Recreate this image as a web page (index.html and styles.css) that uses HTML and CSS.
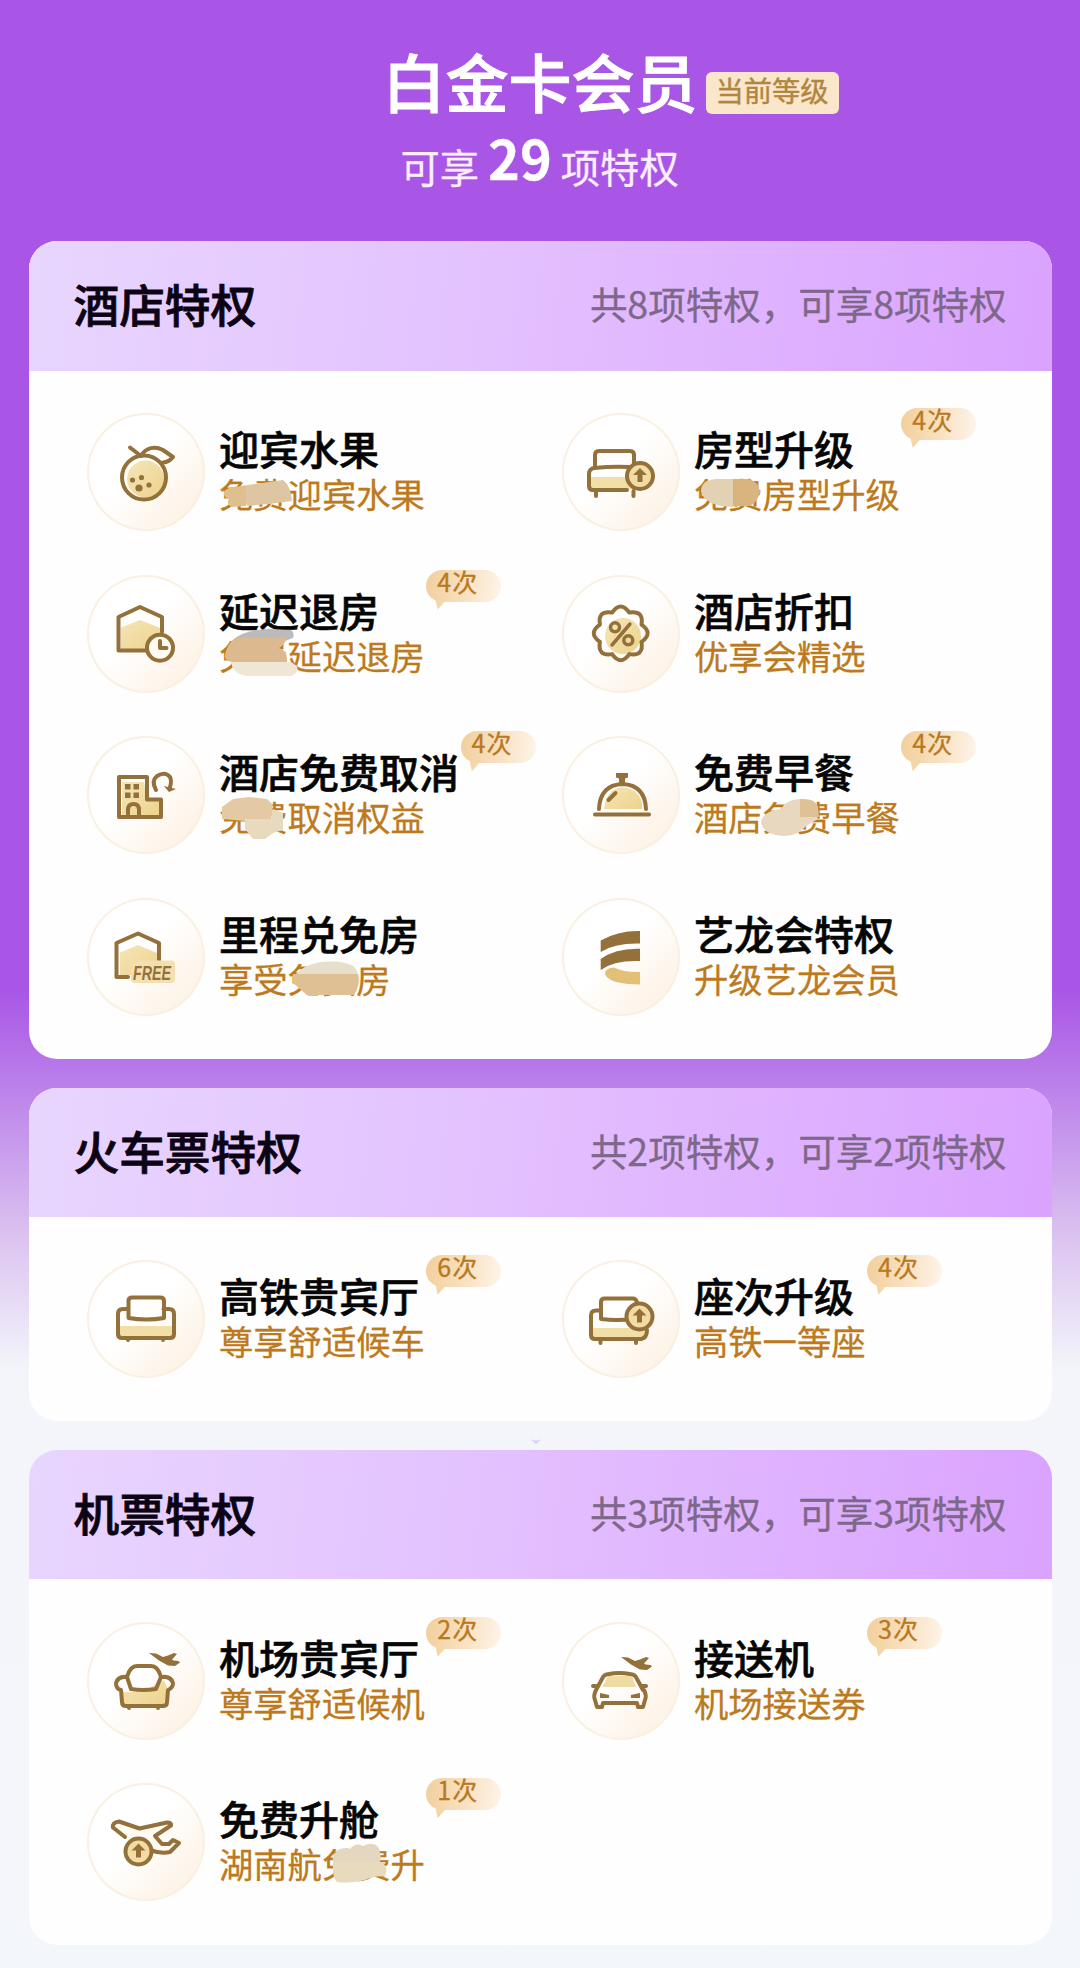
FILE: index.html
```html
<!DOCTYPE html>
<html lang="zh-CN">
<head>
<meta charset="utf-8">
<title>白金卡会员</title>
<link rel="stylesheet" href="styles.css">
</head>
<body>
<svg class="defs" width="0" height="0" aria-hidden="true">
  <defs>
    <linearGradient id="gold" x1="0" y1="0" x2="1" y2="1"><stop offset="0" stop-color="#f5e6b8"/><stop offset="1" stop-color="#edd28c"/></linearGradient>
    <g id="up">
      <circle r="13" fill="#f3dca4" stroke="#94703a" stroke-width="4"/>
      <path d="M0-8l7 7h-4.500v7h-5v-7H-7z" fill="#94703a"/>
    </g>
    <path id="jet" d="M0 0l7 .5 7 3.500 5-1.500 6-2.500 3 1-5 5.500 1.500 1 5 .5 1.500 1.500-5 3.500-7-.500-9-5z" fill="#94703a"/>
  </defs>
</svg>
<main class="page">
  <header class="hero">
    <h1 class="level">白金卡会员<span class="tag">当前等级</span></h1>
    <p class="total"><span>可享</span><b>29</b><span>项特权</span></p>
  </header>

  <section class="card">
    <div class="head"><h2>酒店特权</h2><span>共8项特权，可享8项特权</span></div>
    <div class="grid">
      <article class="item">
        <svg class="icon" viewBox="0 0 118 118"><circle cx="58.500" cy="66" r="18.500" fill="url(#gold)" stroke="none"/><circle cx="57" cy="64.500" r="22"/><path d="M43 34.500l11 8.500C59 34 68 33 76 37l10 7q-4 5-10 5.500"/><g class="solid"><circle cx="45.500" cy="67" r="2.600"/><circle cx="54.500" cy="64.500" r="2.600"/><circle cx="62" cy="72" r="2.600"/><circle cx="52" cy="75" r="3.600"/></g></svg>
        <div class="text"><h3>迎宾水果</h3><p>免费迎宾水果</p>
          <svg class="smear" viewBox="0 0 210 50"><path fill="#dfc6a2" d="M22 14L64 8q8 6 9 21L50 32 28 34z"/><path fill="#dfbf8d" d="M5 20q3-6 22-6v20l-15 1q-5-4-2-8-6-2-5-7z"/></svg></div>
      </article>
      <article class="item">
        <svg class="icon" viewBox="0 0 118 118"><path d="M28 64h46v12H28z" fill="#f2dfa8" stroke="none"/><path d="M33 54V42q0-4 4-4h31q4 0 4 4v8M65 77H31q-4 0-4-4V61q0-5 5-6 20-2 35-1M34 78v5M71.500 78v5"/><use href="#up" x="78" y="63"/></svg>
        <div class="text"><h3>房型升级</h3><p>免费房型升级</p><span class="badge">4次</span>
          <svg class="smear" viewBox="0 0 210 50"><path fill="#e3d1b3" d="M39 7H22Q7 8 7 19q3 15 32 16z"/><path fill="#d8b47f" d="M39 7h16q10 3 11 13-3 12-11 14H39z"/></svg></div>
      </article>
      <article class="item">
        <svg class="icon" viewBox="0 0 118 118"><path d="M34 52.500L53 45l20 8v21H34z" fill="url(#gold)" stroke="none"/><path d="M75 57V42L53 32 31.500 42v33.500H60"/><circle cx="73" cy="72.700" r="13" fill="#fffaf2"/><path d="M73 66v7h6.500"/></svg>
        <div class="text"><h3>延迟退房</h3><p>免费延迟退房</p><span class="badge">4次</span>
          <svg class="smear" viewBox="0 0 210 50"><path fill="#bdbabd" d="M16 4Q28-4 50-5l22 1q4 3 2 8l-8 3z"/><path fill="#dcb98f" d="M16 4l52-1q-2 8-8 11 9 2 8 14H14q-9-1-8-7 2-11 10-17z"/><path fill="#f0e6d5" d="M12 28h60l6 4q2 6-5 10H28q-14-2-16-14z"/></svg></div>
      </article>
      <article class="item">
        <svg class="icon" viewBox="0 0 118 118"><circle cx="61" cy="61" r="18" fill="url(#gold)" stroke="none"/><path transform="translate(58.700 58.300)" d="M-8.600-20.800Q0-33 8.600-20.800 23.300-23.300 20.800-8.600 33 0 20.800 8.600 23.300 23.300 8.600 20.800 0 33-8.600 20.800-23.300 23.300-20.800 8.600-33 0-20.800-8.600-23.300-23.300-8.600-20.800z"/><circle cx="53" cy="52.300" r="4.500" stroke-width="3.500"/><circle cx="66.300" cy="65.300" r="4.500" stroke-width="3.500"/><path d="M68 49L50 70" stroke-width="3.500"/></svg>
        <div class="text"><h3>酒店折扣</h3><p>优享会精选</p></div>
      </article>
      <article class="item">
        <svg class="icon" viewBox="0 0 118 118"><path d="M35 46h22l3 18h13v16H35z" fill="url(#gold)" stroke="none"/><path d="M32 41h28v22.500h14V81H32zM41 80v-6q0-6 5.500-6t5.500 6v6M69 54q-5-9 1-14 8-5 13 1 2 4 0 10"/><g class="solid"><rect x="38" y="48" width="5.500" height="5.500"/><rect x="46.500" y="48" width="5.500" height="5.500"/><rect x="38" y="56.500" width="5.500" height="5.500"/><rect x="46.500" y="56.500" width="5.500" height="5.500"/><path d="M77 50l12 3-7 3z"/></g></svg>
        <div class="text"><h3>酒店免费取消</h3><p>免费取消权益</p><span class="badge">4次</span>
          <svg class="smear" viewBox="0 0 210 50"><path fill="#e3caa5" d="M3 24V12L14 4 30 2l18 2 6 6-2 16H26z"/><path fill="#e8dabf" d="M26 24h26l2-10 10 4v17l-10 3-8 6H34l-8-10z"/></svg></div>
      </article>
      <article class="item">
        <svg class="icon" viewBox="0 0 118 118"><path d="M42 73q2-20 18-22 16 1 20 16v6z" fill="url(#gold)" stroke="none"/><path d="M37 73q1-24 23.500-25Q83 49 84 73M33 78.500H87M46.500 64l7-7"/><path class="solid" d="M54 37h12v4.500l-3 1V48h-6v-5.500l-3-1z"/></svg>
        <div class="text"><h3>免费早餐</h3><p>酒店免费早餐</p><span class="badge">4次</span>
          <svg class="smear" viewBox="0 0 210 50"><path fill="#e7d8bf" d="M106 4Q93 4 87 14q-19 2-20 14 3 12 22 13 15 0 23-10l12-7-4-8z"/><path fill="#dfc195" d="M106 4q16-1 18 8l1 10h-19z"/></svg></div>
      </article>
      <article class="item">
        <svg class="icon" viewBox="0 0 118 118"><path d="M33 54.500L51 47l19 8v15l-24 7H33z" fill="url(#gold)" stroke="none"/><path d="M41 79H29.500V45L51 35.500 72 45v17"/><rect x="44" y="62.500" width="44" height="22.500" rx="4" fill="#f4dfb0" stroke="none"/><text class="free" x="46" y="81.500" textLength="38" lengthAdjust="spacingAndGlyphs">FREE</text></svg>
        <div class="text"><h3>里程兑免房</h3><p>享受免费房</p>
          <svg class="smear" viewBox="0 0 210 50"><path fill="#e7decb" d="M76 18q8-10 26-13 22-2 32 4 5 4 5 9z"/><path fill="#dfbf94" d="M74 17h65q3 10-4 21H88L74 26z"/></svg></div>
      </article>
      <article class="item">
        <svg class="icon" viewBox="0 0 118 118"><g class="solid"><path d="M38.700 42.500Q56 32.500 78 33v12.500Q52 45 38.700 54z"/><path d="M38.700 61Q54 50 78 50.800V63Q52 62 38.700 72z"/><path fill="#e2c078" d="M43 76q0-6 9-6.500Q62 74.500 78 74v12.500Q46 86 43 76z"/></g></svg>
        <div class="text"><h3>艺龙会特权</h3><p>升级艺龙会员</p></div>
      </article>
    </div>
  </section>

  <section class="card">
    <div class="head"><h2>火车票特权</h2><span>共2项特权，可享2项特权</span></div>
    <div class="grid">
      <article class="item">
        <svg class="icon" viewBox="0 0 118 118"><path d="M32 66h54v11H32z" fill="#f2dfa8" stroke="none"/><path d="M41.500 49H36q-5 0-5 5v20q0 4 4 4h48q4 0 4-4V54q0-5-5-5h-5.500M45 37.500h28.500q3.500 0 3.500 3.500v17q-17 3-35.500 0V41q0-3.500 3.500-3.500zM41 79v1M76 79v1"/></svg>
        <div class="text"><h3>高铁贵宾厅</h3><p>尊享舒适候车</p><span class="badge">6次</span></div>
      </article>
      <article class="item">
        <svg class="icon" viewBox="0 0 118 118"><path d="M30 68h53v10H30z" fill="#f2dfa8" stroke="none"/><path d="M38 50.500h-4q-5 0-5 5V75q0 4 4 4h46q6-1 6-9M72 59q-18 2-33 0V42q0-3.500 3.500-3.500H71q3 0 4 4M38.500 80v3M74 80v3"/><use href="#up" x="77.500" y="56.500"/></svg>
        <div class="text"><h3>座次升级</h3><p>高铁一等座</p><span class="badge">4次</span></div>
      </article>
    </div>
  </section>
  <svg class="notch" width="14" height="6" viewBox="0 0 14 6" aria-hidden="true"><path d="M1 0q6 3 12 0L7 5z"/></svg>

  <section class="card">
    <div class="head"><h2>机票特权</h2><span>共3项特权，可享3项特权</span></div>
    <div class="grid">
      <article class="item">
        <svg class="icon" viewBox="0 0 118 118"><path d="M35 70h20l22-12 3 8-3 17H36z" fill="url(#gold)" stroke="none"/><path d="M40 55q3-11 10-11h14q7 0 10 11M40 55q-9-1-11 6 0 6 5 7l1 12q0 4 4 4h37q4 0 4-4l1-12q5-2 5-7-2-7-11-6M40 55l4 12q12 2 25 0l5-12M42 84v2M71 84v2"/><use href="#jet" x="62" y="31"/></svg>
        <div class="text"><h3>机场贵宾厅</h3><p>尊享舒适候机</p><span class="badge">2次</span></div>
      </article>
      <article class="item">
        <svg class="icon" viewBox="0 0 118 118"><path d="M46 54h24l4 11H40z" fill="#efdca4" stroke="none"/><path d="M34 68l6-11q2-5 7-5 10-2 21 0 5 0 7 5l6 11M31 64h4M80 64h4M34 68q-3 6-1 10l2 7h5l1-4h34l1 4h5l2-7q2-4-1-10"/><path class="solid" d="M38 71l9 2v3h-9zM78 71l-9 2v3h9z"/><use href="#jet" x="59" y="35"/></svg>
        <div class="text"><h3>接送机</h3><p>机场接送券</p><span class="badge">3次</span></div>
      </article>
      <article class="item">
        <svg class="icon" viewBox="0 0 118 118"><path d="M38 54L26 44.500q-1-5 6-6l20.500 7L80 39.500q5 0 4 3L68 53l7 8h7l4-4 6 3-9 9q-9 2-20-2" fill="#fffaf2"/><use href="#up" x="51.500" y="68.500"/></svg>
        <div class="text"><h3>免费升舱</h3><p>湖南航免费升</p><span class="badge">1次</span>
          <svg class="smear" viewBox="0 0 210 50"><path fill="#e4d7c0" d="M114 20q-2-9 7-13 8-2 10 0 6-7 13-3 10-5 15 1 4 8 2 15z"/><path fill="#e8dabc" d="M114 20h49q7 6 3 14-12 0-20 4-16 4-28 2-5-4-4-20z"/></svg></div>
      </article>
    </div>
  </section>
</main>
</body>
</html>
```

FILE: styles.css
```css
* { box-sizing: border-box; margin: 0; padding: 0; }

body {
  background: #f4f6fa;
  font-family: "Noto Sans CJK SC", "Noto Sans", sans-serif;
}

.defs { position: absolute; }

.page {
  position: relative;
  width: 1080px;
  height: 1968px;
  padding: 0 28.500px;
  background: linear-gradient(#a956e6 0, #a956e6 990px, #bb80ea 1085px, #dcc4f0 1240px, #f3f5fa 1370px, #f3f6fa 100%);
  overflow: hidden;
}

.hero {
  height: 241px;
  padding-top: 33px;
  color: #fff;
}

.level {
  position: relative;
  width: 318px;
  margin-left: 354px;
  font-size: 63px;
  font-weight: 500;
  line-height: 94px;
  white-space: nowrap;
  -webkit-text-stroke: 1px #fff;
}

.tag {
  position: absolute;
  left: 323px;
  top: 39px;
  width: 133px;
  height: 42px;
  border-radius: 6px;
  background: #fae7cb;
  color: #b0863f;
  font-size: 28.300px;
  font-weight: 400;
  line-height: 36px;
  text-align: center;
  -webkit-text-stroke: .4px #b0863f;
}

.total {
  display: flex;
  align-items: baseline;
  margin: -3px 0 0 372px;
  font-size: 39.300px;
  line-height: 72px;
  color: #fbeeff;
  -webkit-text-stroke: .3px #fbeeff;
}

.total b {
  margin: 0 9px 0 9px;
  font-size: 54px;
  font-weight: 700;
  line-height: 72px;
  position: relative;
  top: -3px;
  color: #fff;
}

.card {
  margin-bottom: 28.300px;
  border-radius: 28px;
  background: #fefefe;
  overflow: hidden;
}

.head {
  display: flex;
  align-items: center;
  justify-content: space-between;
  height: 129.500px;
  padding: 0 45px 6px;
  background: linear-gradient(97deg, #e8d6fe 0%, #e3c1fe 45%, #daa3fe 100%);
}

.head h2 {
  font-size: 45.700px;
  font-weight: 500;
  color: #0c0414;
  -webkit-text-stroke: .8px #0c0414;
}

.head span {
  font-size: 37.500px;
  color: #7d6889;
  -webkit-text-stroke: .3px #7d6889;
}

.grid {
  display: grid;
  grid-template-columns: 475px 475px;
  row-gap: 43.600px;
  padding: 42.500px 0 43.700px 58px;
}

.item {
  display: flex;
  align-items: center;
  gap: 14.500px;
  height: 118px;
}

.icon {
  flex: none;
  width: 118px;
  height: 118px;
  border-radius: 50%;
  box-shadow: inset 0 0 0 2px #faf0e2;
  background: linear-gradient(135deg, #fff 45%, #fdeedd 100%);
  fill: none;
  stroke: #94703a;
  stroke-width: 4;
  stroke-linejoin: round;
  stroke-linecap: round;
}

.icon .solid {
  fill: #94703a;
  stroke: none;
}

.icon use { stroke: none; }

.icon .free {
  fill: #94703a;
  stroke: none;
  font: italic 700 20px "Liberation Sans", sans-serif;
}

.text {
  position: relative;
  top: -1px;
  height: 88px;
  white-space: nowrap;
}

.text h3 {
  position: relative;
  top: -1px;
  font-size: 40px;
  font-weight: 500;
  line-height: 44px;
  color: #060606;
  -webkit-text-stroke: .6px #060606;
}

.text p {
  font-size: 34.300px;
  line-height: 44px;
  color: #bd7a1c;
  -webkit-text-stroke: .3px #bd7a1c;
}

.smear {
  position: absolute;
  left: 0;
  top: 45px;
  width: 210px;
  height: 50px;
  overflow: visible;
}

.badge {
  position: absolute;
  left: calc(100% + 1.500px);
  top: -19px;
  width: 75px;
  height: 32px;
  padding-left: 11px;
  border-radius: 16px;
  background: linear-gradient(95deg, #f2cf9c, #f8e0bf 50%, #fef4e9);
  color: #b8791f;
  font-size: 25px;
  line-height: 23px;
  letter-spacing: 1px;
  -webkit-text-stroke: .3px #b8791f;
}

.badge::after {
  content: "";
  position: absolute;
  left: 9px;
  top: 29px;
  width: 12px;
  height: 11px;
  background: #f4d6a8;
  clip-path: polygon(0 0, 100% 0, 20% 100%);
}

.notch {
  position: absolute;
  left: 529px;
  top: 1439px;
  fill: #dccff0;
}
```
